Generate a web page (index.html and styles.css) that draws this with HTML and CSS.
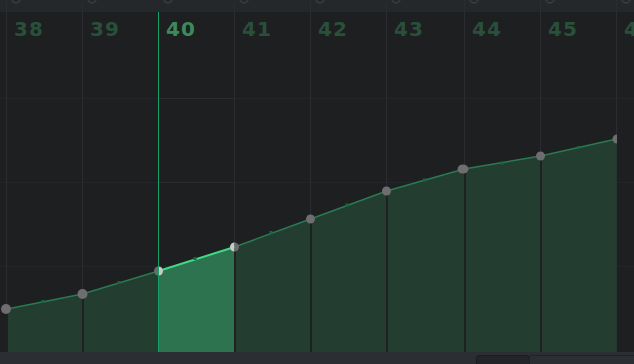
FILE: index.html
```html
<!DOCTYPE html>
<html>
<head>
<meta charset="utf-8">
<link rel="stylesheet" href="styles.css">
</head>
<body>
<div class="editor">
  <svg class="canvas" width="634" height="364" viewBox="0 0 634 364">
    <defs>
      <clipPath id="clip"><rect x="0" y="0" width="617" height="364"/></clipPath>
      <clipPath id="lefthalf"><rect x="0" y="0" width="158.5" height="364"/></clipPath>
      <clipPath id="righthalf"><rect x="158.5" y="0" width="100" height="364"/></clipPath>
      <clipPath id="lefthalf2"><rect x="200" y="0" width="34.5" height="364"/></clipPath>
      <clipPath id="righthalf2"><rect x="234.5" y="0" width="40" height="364"/></clipPath>
    </defs>
    <!-- header strip -->
    <rect class="header" x="0" y="0" width="634" height="12"/>
    <g class="hrings">
      <circle cx="16" cy="-1" r="4"/><circle cx="92" cy="-1" r="4"/><circle cx="168" cy="-1" r="4"/>
      <circle cx="244" cy="-1" r="4"/><circle cx="320" cy="-1" r="4"/><circle cx="396" cy="-1" r="4"/>
      <circle cx="474" cy="-1" r="4"/><circle cx="550" cy="-1" r="4"/><circle cx="626" cy="-1" r="4"/>
    </g>
    <!-- grid -->
    <g class="grid faint">
      <line x1="0" y1="98.5" x2="634" y2="98.5"/>
      <line x1="0" y1="182.5" x2="634" y2="182.5"/>
      <line x1="0" y1="266.5" x2="634" y2="266.5"/>
    </g>
    <g class="grid">
      <line x1="158.5" y1="98.5" x2="234" y2="98.5"/>
      <line x1="158.5" y1="182.5" x2="234" y2="182.5"/>
      <line x1="6.5" y1="0" x2="6.5" y2="352"/>
      <line x1="82.5" y1="0" x2="82.5" y2="352"/>
      <line x1="234.5" y1="0" x2="234.5" y2="352"/>
      <line x1="310.5" y1="0" x2="310.5" y2="352"/>
      <line x1="386.5" y1="0" x2="386.5" y2="352"/>
      <line x1="464.5" y1="0" x2="464.5" y2="352"/>
      <line x1="540.5" y1="0" x2="540.5" y2="352"/>
      <line x1="616.5" y1="0" x2="616.5" y2="352"/>
    </g>
    <g clip-path="url(#clip)">
      <!-- fills -->
      <polygon class="fill" points="7,309 82.5,294 158.5,271 158.5,352 7,352"/>
      <polygon class="fill sel" points="158.5,271 234.5,247 234.5,352 158.5,352"/>
      <polygon class="fill" points="234.5,247 310.5,219 386.5,191 464,169 540.5,156 616.5,139 616.5,352 234.5,352"/>
      <!-- dividers inside fill -->
      <g class="div">
        <line x1="7" y1="309" x2="7" y2="352"/>
        <line x1="83" y1="294" x2="83" y2="352"/>
        <line x1="235" y1="247" x2="235" y2="352"/>
        <line x1="311" y1="219" x2="311" y2="352"/>
        <line x1="387" y1="191" x2="387" y2="352"/>
        <line x1="465" y1="169" x2="465" y2="352"/>
        <line x1="541" y1="156" x2="541" y2="352"/>
      </g>
      <!-- curve -->
      <polyline class="curve" points="7,309 82.5,294 158.5,271"/>
      <polyline class="curve" points="234.5,247 310.5,219 386.5,191 464,169 540.5,156 616.5,139"/>
      <line class="curve sel" x1="158.5" y1="271" x2="234.5" y2="247"/>
      <!-- mid markers -->
      <g class="mid">
        <rect x="41.5" y="300" width="3" height="3"/>
        <rect x="117.5" y="281" width="3" height="3"/>
        <rect x="193.5" y="257" width="3" height="3"/>
        <rect x="269.5" y="231" width="3" height="3"/>
        <rect x="345.5" y="203.5" width="3" height="3"/>
        <rect x="423" y="178.5" width="3" height="3"/>
        <rect x="500.5" y="161.5" width="3" height="3"/>
        <rect x="577" y="146" width="3" height="3"/>
      </g>
      <!-- knots -->
      <g class="knot">
        <circle cx="6" cy="309" r="5"/>
        <circle cx="82.5" cy="294" r="5"/>
        <circle cx="310.5" cy="219" r="4.5"/>
        <circle cx="386.5" cy="191" r="4.5"/>
        <ellipse cx="463" cy="169" rx="5.5" ry="4.5"/>
        <circle cx="540.5" cy="156" r="4.5"/>
        <circle cx="617" cy="139" r="4.5"/>
      </g>
      <circle class="knot-d" cx="158.5" cy="271" r="4.5" clip-path="url(#lefthalf)"/>
      <circle class="knot-l" cx="158.5" cy="271" r="4.5" clip-path="url(#righthalf)"/>
      <circle class="knot-l" cx="234.5" cy="247" r="4.5" clip-path="url(#lefthalf2)"/>
      <circle class="knot-d" cx="234.5" cy="247" r="4.5" clip-path="url(#righthalf2)"/>
    </g>
    <!-- playhead -->
    <line class="playhead" x1="158.5" y1="12" x2="158.5" y2="352"/>
    <!-- labels -->
    <g class="labels">
      <text x="14" y="36">38</text>
      <text x="90" y="36">39</text>
      <text x="166" y="36" class="cur">40</text>
      <text x="242" y="36">41</text>
      <text x="318" y="36">42</text>
      <text x="394" y="36">43</text>
      <text x="472" y="36">44</text>
      <text x="548" y="36">45</text>
      <text x="624" y="36">46</text>
    </g>
    <!-- bottom bar -->
    <rect class="footer" x="0" y="352" width="634" height="12"/>
    <rect class="thumb" x="476.5" y="355.5" width="53" height="12" rx="3"/>
    <rect class="track" x="529.5" y="355.5" width="110" height="12" rx="2"/>
  </svg>
</div>
</body>
</html>
```

FILE: styles.css
```css
html, body {
  margin: 0;
  padding: 0;
  background: #1e1f21;
  overflow: hidden;
}
.editor {
  width: 634px;
  height: 364px;
}
.canvas {
  display: block;
}
.header { fill: #25282b; }
.hrings circle { fill: none; stroke: #3b3e42; stroke-width: 1.5; }
.grid line { stroke: #2a2c2f; stroke-width: 1; }
.grid.faint line { stroke: #232528; }
.fill { fill: #233e31; }
.fill.sel { fill: #2e7350; }
.div line { stroke: #1f2022; stroke-width: 2; }
.curve { fill: none; stroke: #2a7a52; stroke-width: 1.5; }
.curve.sel { stroke: #3ddc84; stroke-width: 2; }
.mid rect { fill: #166548; }
.knot circle, .knot ellipse { fill: #6e6e70; }
.knot-d { fill: #6a6a6c; }
.knot-l { fill: #c9c9c9; }
.playhead { stroke: #18a06a; stroke-width: 1; }
.labels text {
  font-family: "DejaVu Sans", sans-serif;
  font-weight: bold;
  font-size: 20px;
  fill: #28503a;
  letter-spacing: 1px;
}
.labels text.cur { fill: #3a8a5a; }
.footer { fill: #2b2e32; }
.thumb { fill: #222427; stroke: #1b1c1e; stroke-width: 1; }
.track { fill: #2b2e32; stroke: #202225; stroke-width: 1; }
```
